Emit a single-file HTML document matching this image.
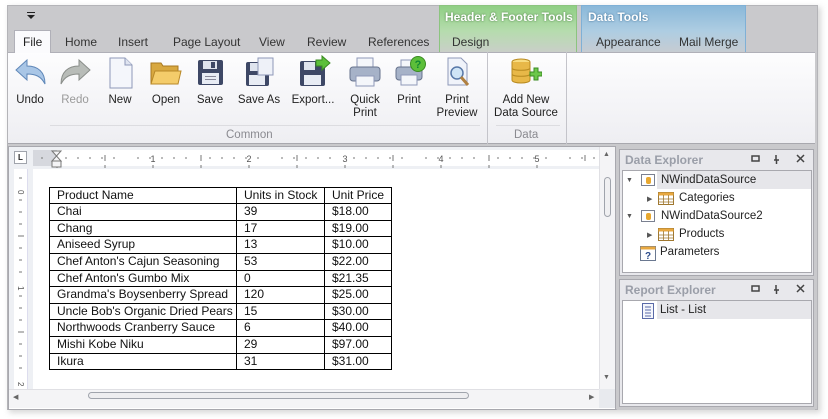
<!DOCTYPE html>
<html><head><meta charset="utf-8"><style>
*{margin:0;padding:0;box-sizing:border-box}
body{width:828px;height:419px;background:#fff;font-family:"Liberation Sans",sans-serif;font-size:12px;color:#1e1e1e;position:relative;overflow:hidden}
.a{position:absolute}
.t{position:absolute;white-space:nowrap}
.lbl{position:absolute;text-align:center;font-size:11.5px;line-height:13px;color:#222;white-space:nowrap;transform:translateX(-50%)}
.ic{position:absolute}
.cell{position:absolute;border:1px solid #000;font-size:12px;line-height:15px;padding-left:7px;color:#111}
.tree{position:absolute;font-size:11.5px;color:#222;white-space:nowrap}
</style></head><body>
<div class="a" style="left:9px;top:7px;width:812px;height:406px;background:#d8d8d8;filter:blur(3px)"></div>
<div class="a" style="left:7px;top:5px;width:811px;height:405px;background:#c9c9cc;border:1px solid #b4b4b8"></div>
<svg class="a" style="left:26px;top:12px" width="10" height="8"><rect x="1" y="0" width="8" height="1" fill="#222"/><path d="M1 3h8l-4 4z" fill="#222"/></svg>
<div class="a" style="left:439px;top:5px;width:138px;height:47px;background:linear-gradient(#8fcf84,#b6dcae 55%,#c9cfc8);border:1px solid #8cc47f;border-bottom:none"></div>
<div class="t" style="left:445px;top:10px;color:#fff;font-weight:bold;font-size:12px;text-shadow:0 0 2px #4a7a40">Header &amp; Footer Tools</div>
<div class="a" style="left:581px;top:5px;width:165px;height:47px;background:linear-gradient(#8ab8d9,#aecde2 55%,#c6ccd2);border:1px solid #7fb0d6;border-bottom:none"></div>
<div class="t" style="left:588px;top:10px;color:#fff;font-weight:bold;font-size:12px;text-shadow:0 0 2px #3a6a90">Data Tools</div>
<div class="a" style="left:14px;top:30px;width:37px;height:23px;background:#fbfbfd;border:1px solid #b0b0b8;border-bottom:none;z-index:2"></div>
<div class="t" style="left:23px;top:35px;z-index:3">File</div>
<div class="t" style="left:65px;top:35px;color:#333">Home</div>
<div class="t" style="left:118px;top:35px;color:#333">Insert</div>
<div class="t" style="left:173px;top:35px;color:#333">Page Layout</div>
<div class="t" style="left:259px;top:35px;color:#333">View</div>
<div class="t" style="left:307px;top:35px;color:#333">Review</div>
<div class="t" style="left:368px;top:35px;color:#333">References</div>
<div class="t" style="left:452px;top:35px;color:#333">Design</div>
<div class="t" style="left:596px;top:35px;color:#333">Appearance</div>
<div class="t" style="left:679px;top:35px;color:#333">Mail Merge</div>
<div class="a" style="left:8px;top:52px;width:807px;height:92px;background:linear-gradient(#fdfdfe,#eeeef2);border-top:1px solid #b0b0b8;border-bottom:1px solid #a8a8ae"></div>
<div class="a" style="left:487px;top:52px;width:1px;height:92px;background:#c4c4ca"></div>
<div class="a" style="left:566px;top:52px;width:1px;height:92px;background:#c4c4ca"></div>
<div class="a" style="left:50px;top:125px;width:430px;height:1px;background:#dcdce0"></div>
<div class="a" style="left:496px;top:125px;width:64px;height:1px;background:#dcdce0"></div>
<div class="t" style="left:226px;top:129px;color:#8a8a90;font-size:11.5px">Common</div>
<div class="t" style="left:514px;top:129px;color:#8a8a90;font-size:11.5px">Data</div>

<svg class="ic" style="left:14px;top:58px" width="34" height="28" viewBox="0 0 34 28"><path d="M2 12 L13 2 L13 8 C24 8 31 14 31 26 C27 18 21 16 13 16 L13 22 Z" fill="#a9c6e6" stroke="#5f87b8"/></svg>
<svg class="ic" style="left:58px;top:58px" width="34" height="28" viewBox="0 0 34 28"><path d="M32 12 L21 2 L21 8 C10 8 3 14 3 26 C7 18 13 16 21 16 L21 22 Z" fill="#b8bcb8" stroke="#8a8e8a"/></svg>
<svg class="ic" style="left:108px;top:57px" width="26" height="32" viewBox="0 0 26 32"><path d="M2 1 H17 L24 8 V31 H2 Z" fill="#f4f6fb" stroke="#8e98b8"/><path d="M17 1 V8 H24" fill="#dfe4f0" stroke="#8e98b8"/></svg>
<svg class="ic" style="left:150px;top:60px" width="32" height="26" viewBox="0 0 32 26"><path d="M1 3 H11 L13 6 H28 V24 H1 Z" fill="#d8a840" stroke="#a87820"/><path d="M1 24 L5 11 H31 L28 24 Z" fill="#f4cc6a" stroke="#b88828"/></svg>
<svg class="ic" style="left:197px;top:59px" width="27" height="27" viewBox="0 0 27 27"><rect x="1" y="1" width="25" height="25" rx="2" fill="#3e4866"/><rect x="6" y="2" width="14" height="8" fill="#dfe4ee"/><rect x="14" y="3" width="4" height="6" fill="#3e4866"/><rect x="5" y="14" width="17" height="11" fill="#e8ecf4"/><rect x="8" y="17" width="11" height="1" fill="#889"/><rect x="8" y="20" width="11" height="1" fill="#889"/></svg>
<svg class="ic" style="left:245px;top:57px" width="30" height="30" viewBox="0 0 30 30"><rect x="1" y="5" width="23" height="24" rx="2" fill="#3e4866"/><rect x="5" y="6" width="8" height="8" fill="#dfe4ee"/><rect x="4" y="18" width="16" height="10" fill="#e8ecf4"/><rect x="13" y="1" width="15" height="17" fill="#eef1f8" stroke="#8e98b8"/></svg>
<svg class="ic" style="left:299px;top:55px" width="32" height="32" viewBox="0 0 32 32"><rect x="1" y="6" width="25" height="25" rx="2" fill="#3e4866"/><rect x="5" y="7" width="11" height="8" fill="#dfe4ee"/><rect x="5" y="20" width="17" height="10" fill="#e8ecf4"/><path d="M17 5 H23 V1 L31 8 L23 15 V11 H17 Z" fill="#5cbf3a" stroke="#3a8a22"/></svg>
<svg class="ic" style="left:349px;top:57px" width="32" height="30" viewBox="0 0 32 30"><rect x="8" y="1" width="16" height="10" fill="#f4f6fa" stroke="#8e98b8"/><rect x="1" y="10" width="30" height="14" rx="3" fill="#a6b2c8" stroke="#66728c"/><rect x="7" y="19" width="18" height="10" fill="#f4f6fa" stroke="#8e98b8"/></svg>
<svg class="ic" style="left:395px;top:55px" width="32" height="32" viewBox="0 0 32 32"><rect x="6" y="5" width="14" height="8" fill="#f4f6fa" stroke="#8e98b8"/><rect x="1" y="12" width="26" height="13" rx="3" fill="#a6b2c8" stroke="#66728c"/><rect x="6" y="20" width="16" height="10" fill="#f4f6fa" stroke="#8e98b8"/><circle cx="23" cy="9" r="7.5" fill="#5cbf3a" stroke="#3a8a22"/><text x="23" y="13" font-size="11" font-weight="bold" text-anchor="middle" fill="#183" font-family="Liberation Sans">?</text></svg>
<svg class="ic" style="left:445px;top:57px" width="28" height="32" viewBox="0 0 28 32"><path d="M3 1 H16 L22 7 V28 H3 Z" fill="#f0f3fa" stroke="#8e98b8"/><circle cx="12" cy="16" r="6" fill="#cfe4f6" stroke="#5878a8" stroke-width="1.5"/><path d="M16 20 L23 28" stroke="#b08040" stroke-width="3"/></svg>
<svg class="ic" style="left:510px;top:58px" width="32" height="28" viewBox="0 0 32 28"><ellipse cx="11" cy="4" rx="9" ry="3" fill="#f8dc80" stroke="#b88a20"/><path d="M2 4 V22 C2 26 20 26 20 22 V4" fill="#e8b848" stroke="#b88a20"/><path d="M2 10 C2 13 20 13 20 10 M2 16 C2 19 20 19 20 16" fill="none" stroke="#b88a20"/><path d="M20 14 H24 V10 H28 V14 H32 V18 H28 V22 H24 V18 H20 Z" fill="#6cc84a" stroke="#3a8a22"/></svg>

<div class="lbl" style="left:30px;top:94px">Undo</div>
<div class="lbl" style="left:75px;top:94px;color:#9a9a9a">Redo</div>
<div class="lbl" style="left:120px;top:94px">New</div>
<div class="lbl" style="left:166px;top:94px">Open</div>
<div class="lbl" style="left:210px;top:94px">Save</div>
<div class="lbl" style="left:259px;top:94px">Save As</div>
<div class="lbl" style="left:313px;top:94px">Export...</div>
<div class="lbl" style="left:365px;top:94px">Quick<br>Print</div>
<div class="lbl" style="left:409px;top:94px">Print</div>
<div class="lbl" style="left:457px;top:94px">Print<br>Preview</div>
<div class="lbl" style="left:526px;top:94px">Add New<br>Data Source</div>

<div class="a" style="left:8px;top:146px;width:608px;height:264px;background:#fff;border:1px solid #a8a8ae"></div>
<div class="a" style="left:9px;top:147px;width:606px;height:22px;background:#eef0f4"></div>
<div class="a" style="left:14px;top:151px;width:13px;height:13px;background:#fff;border:1px solid #a0a4ac;font-size:8px;line-height:11px;text-align:center;font-weight:bold">L</div>
<div class="a" style="left:33px;top:150px;width:566px;height:16px;background:#fff"></div>
<div class="a" style="left:33px;top:150px;width:24px;height:16px;background:#d6d8de"></div>
<svg class="a" style="left:33px;top:150px" width="566" height="18">
<g stroke="#777" stroke-width="1">
<path d="M9 7v2M33 7v2M45 7v2M57 7v2M69 7v2M81 7v2M105 7v2M117 7v2M129 7v2M141 7v2M153 7v2M177 7v2M189 7v2M201 7v2M213 7v2M225 7v2M249 7v2M261 7v2M273 7v2M285 7v2M297 7v2M321 7v2M333 7v2M345 7v2M357 7v2M369 7v2M393 7v2M405 7v2M417 7v2M429 7v2M441 7v2M465 7v2M477 7v2M489 7v2M501 7v2M513 7v2M537 7v2M549 7v2M561 7v2"/>
<path d="M72 5v6M168 5v6M264 5v6M360 5v6M456 5v6M552 5v6"/>
<path d="M24 15v3M72 15v3M120 15v3M168 15v3M216 15v3M264 15v3M312 15v3M360 15v3M408 15v3M456 15v3M504 15v3"/>
</g>
<g font-size="9" fill="#555" font-family="Liberation Sans" text-anchor="middle"><text x="120" y="12">1</text><text x="216" y="12">2</text><text x="312" y="12">3</text><text x="408" y="12">4</text><text x="504" y="12">5</text></g>
<path d="M19 1h9l-4.5 5z M19 11 l4.5-5 4.5 5z" fill="#f4f4f6" stroke="#777"/><rect x="19" y="11" width="9" height="6" fill="#f4f4f6" stroke="#777"/>
</svg>
<div class="a" style="left:14px;top:169px;width:14px;height:220px;background:#fff;border-right:1px solid #dde"></div>
<div class="a" style="left:9px;top:169px;width:5px;height:220px;background:#eef0f4"></div>
<div class="a" style="left:28px;top:169px;width:5px;height:220px;background:#eef0f4"></div>
<svg class="a" style="left:14px;top:169px" width="14" height="220"><g stroke="#777"><path d="M5 9h3M5 31h3M5 43h3M5 55h3M5 79h3M5 91h3M5 103h3M5 127h3M5 139h3M5 151h3M5 175h3M5 187h3M5 199h3"/><path d="M4 67h6M4 163h6"/></g><g font-size="8" fill="#555" font-family="Liberation Sans"><text x="10" y="21" transform="rotate(90 7 18)">0</text><text x="10" y="117" transform="rotate(90 7 114)">1</text><text x="10" y="213" transform="rotate(90 7 210)">2</text></g></svg>
<div class="a" style="left:599px;top:147px;width:16px;height:242px;background:#f4f4f6;border-left:1px solid #e0e0e4"></div>
<div class="t" style="left:603px;top:151px;font-size:7px;color:#666">&#9650;</div>
<div class="a" style="left:604px;top:177px;width:7px;height:40px;border:1px solid #a0a4ac;border-radius:4px;background:#f0f0f2"></div>
<div class="t" style="left:603px;top:374px;font-size:7px;color:#666">&#9660;</div>
<div class="a" style="left:9px;top:389px;width:590px;height:19px;background:#f4f4f6;border-top:1px solid #e0e0e4"></div>
<div class="t" style="left:13px;top:393px;font-size:7px;color:#666">&#9664;</div>
<div class="a" style="left:88px;top:392px;width:381px;height:7px;border:1px solid #a0a4ac;border-radius:4px;background:#eeeef0"></div>
<div class="t" style="left:589px;top:393px;font-size:7px;color:#666">&#9654;</div>
<div class="a" style="left:599px;top:389px;width:16px;height:19px;background:#e8eaee"></div>

<div class="a" style="left:49px;top:187px">
<div class="cell" style="left:0;top:0;width:188px;height:17px">Product Name</div>
<div class="cell" style="left:187px;top:0;width:89px;height:17px">Units in Stock</div>
<div class="cell" style="left:275px;top:0;width:68px;height:17px">Unit Price</div>
</div>
<div class="a" style="left:49px;top:203.3px">
<div class="cell" style="left:0;top:0;width:188px;height:17.6px">Chai</div><div class="cell" style="left:187px;top:0;width:89px;height:17.6px">39</div><div class="cell" style="left:275px;top:0;width:68px;height:17.6px">$18.00</div>
<div class="cell" style="left:0;top:16.6px;width:188px;height:17.6px">Chang</div><div class="cell" style="left:187px;top:16.6px;width:89px;height:17.6px">17</div><div class="cell" style="left:275px;top:16.6px;width:68px;height:17.6px">$19.00</div>
<div class="cell" style="left:0;top:33.2px;width:188px;height:17.6px">Aniseed Syrup</div><div class="cell" style="left:187px;top:33.2px;width:89px;height:17.6px">13</div><div class="cell" style="left:275px;top:33.2px;width:68px;height:17.6px">$10.00</div>
<div class="cell" style="left:0;top:49.8px;width:188px;height:17.6px">Chef Anton's Cajun Seasoning</div><div class="cell" style="left:187px;top:49.8px;width:89px;height:17.6px">53</div><div class="cell" style="left:275px;top:49.8px;width:68px;height:17.6px">$22.00</div>
<div class="cell" style="left:0;top:66.4px;width:188px;height:17.6px">Chef Anton's Gumbo Mix</div><div class="cell" style="left:187px;top:66.4px;width:89px;height:17.6px">0</div><div class="cell" style="left:275px;top:66.4px;width:68px;height:17.6px">$21.35</div>
<div class="cell" style="left:0;top:83px;width:188px;height:17.6px">Grandma's Boysenberry Spread</div><div class="cell" style="left:187px;top:83px;width:89px;height:17.6px">120</div><div class="cell" style="left:275px;top:83px;width:68px;height:17.6px">$25.00</div>
<div class="cell" style="left:0;top:99.6px;width:188px;height:17.6px">Uncle Bob's Organic Dried Pears</div><div class="cell" style="left:187px;top:99.6px;width:89px;height:17.6px">15</div><div class="cell" style="left:275px;top:99.6px;width:68px;height:17.6px">$30.00</div>
<div class="cell" style="left:0;top:116.2px;width:188px;height:17.6px">Northwoods Cranberry Sauce</div><div class="cell" style="left:187px;top:116.2px;width:89px;height:17.6px">6</div><div class="cell" style="left:275px;top:116.2px;width:68px;height:17.6px">$40.00</div>
<div class="cell" style="left:0;top:132.8px;width:188px;height:17.6px">Mishi Kobe Niku</div><div class="cell" style="left:187px;top:132.8px;width:89px;height:17.6px">29</div><div class="cell" style="left:275px;top:132.8px;width:68px;height:17.6px">$97.00</div>
<div class="cell" style="left:0;top:149.4px;width:188px;height:17.6px">Ikura</div><div class="cell" style="left:187px;top:149.4px;width:89px;height:17.6px">31</div><div class="cell" style="left:275px;top:149.4px;width:68px;height:17.6px">$31.00</div>
</div>

<div class="a" style="left:617px;top:146px;width:198px;height:264px;background:#c9c9cc"></div>
<div class="a" style="left:619px;top:149px;width:195px;height:127px;background:#e8e8ec;border:1px solid #a8a8ae"></div>
<div class="t" style="left:625px;top:153px;font-weight:bold;color:#9a9ea8;font-size:12px">Data Explorer</div>
<div class="a" style="left:622px;top:170px;width:190px;height:103px;background:#fff;border:1px solid #a8a8ae"></div>
<div class="a" style="left:657px;top:171px;width:154px;height:18px;background:#e6e6ea"></div>
<div class="a" style="left:619px;top:279px;width:195px;height:128px;background:#e8e8ec;border:1px solid #a8a8ae"></div>
<div class="t" style="left:625px;top:283px;font-weight:bold;color:#9a9ea8;font-size:12px">Report Explorer</div>
<div class="a" style="left:622px;top:300px;width:190px;height:104px;background:#fff;border:1px solid #a8a8ae"></div>
<div class="a" style="left:657px;top:301px;width:154px;height:18px;background:#e6e6ea"></div>
<svg class="a" style="left:748px;top:153px" width="62" height="12"><g fill="none" stroke="#444" stroke-width="1.5"><rect x="4" y="3" width="7" height="5"/><path d="M28 2v5M26 7h5M28.5 7v4"/><path d="M49 2l7 7M56 2l-7 7"/></g></svg>
<svg class="a" style="left:748px;top:283px" width="62" height="12"><g fill="none" stroke="#444" stroke-width="1.5"><rect x="4" y="3" width="7" height="5"/><path d="M28 2v5M26 7h5M28.5 7v4"/><path d="M49 2l7 7M56 2l-7 7"/></g></svg>
<div class="t" style="left:626px;top:177px;font-size:7px;color:#555">&#9660;</div>
<div class="a" style="left:641px;top:174px;width:14px;height:12px;border:1px solid #7a8090;background:#fff"><div class="a" style="left:4px;top:2px;width:5px;height:7px;background:#e8a830;border-radius:2px"></div></div>
<div class="tree" style="left:661px;top:174px">NWindDataSource</div>
<div class="t" style="left:647px;top:195px;font-size:7px;color:#555">&#9654;</div>
<svg class="a" style="left:658px;top:192px" width="17" height="14"><rect x="0.5" y="0.5" width="15" height="12" fill="#fff" stroke="#a07830"/><rect x="0.5" y="0.5" width="15" height="3" fill="#e8a840"/><path d="M0 7h16M0 10h16M5.5 3v10M10.5 3v10" stroke="#a07830" stroke-width="0.8"/></svg>
<div class="tree" style="left:679px;top:192px">Categories</div>
<div class="t" style="left:626px;top:213px;font-size:7px;color:#555">&#9660;</div>
<div class="a" style="left:641px;top:210px;width:14px;height:12px;border:1px solid #7a8090;background:#fff"><div class="a" style="left:4px;top:2px;width:5px;height:7px;background:#e8a830;border-radius:2px"></div></div>
<div class="tree" style="left:661px;top:210px">NWindDataSource2</div>
<div class="t" style="left:647px;top:231px;font-size:7px;color:#555">&#9654;</div>
<svg class="a" style="left:658px;top:228px" width="17" height="14"><rect x="0.5" y="0.5" width="15" height="12" fill="#fff" stroke="#a07830"/><rect x="0.5" y="0.5" width="15" height="3" fill="#e8a840"/><path d="M0 7h16M0 10h16M5.5 3v10M10.5 3v10" stroke="#a07830" stroke-width="0.8"/></svg>
<div class="tree" style="left:679px;top:228px">Products</div>
<svg class="a" style="left:640px;top:246px" width="16" height="15"><rect x="0.5" y="0.5" width="15" height="14" fill="#fff" stroke="#6a7890"/><rect x="0.5" y="0.5" width="15" height="3" fill="#e8a840"/><text x="8" y="13" font-size="10" font-weight="bold" text-anchor="middle" fill="#2a4a8a" font-family="Liberation Sans">?</text></svg>
<div class="tree" style="left:660px;top:246px">Parameters</div>
<svg class="a" style="left:642px;top:303px" width="12" height="16"><rect x="0.5" y="0.5" width="11" height="15" fill="#f4f6fc" stroke="#5a6aa8"/><path d="M3 4h6M3 7h6M3 10h6M3 13h6" stroke="#5a6aa8"/></svg>
<div class="tree" style="left:660px;top:304px">List - List</div>
</body></html>
